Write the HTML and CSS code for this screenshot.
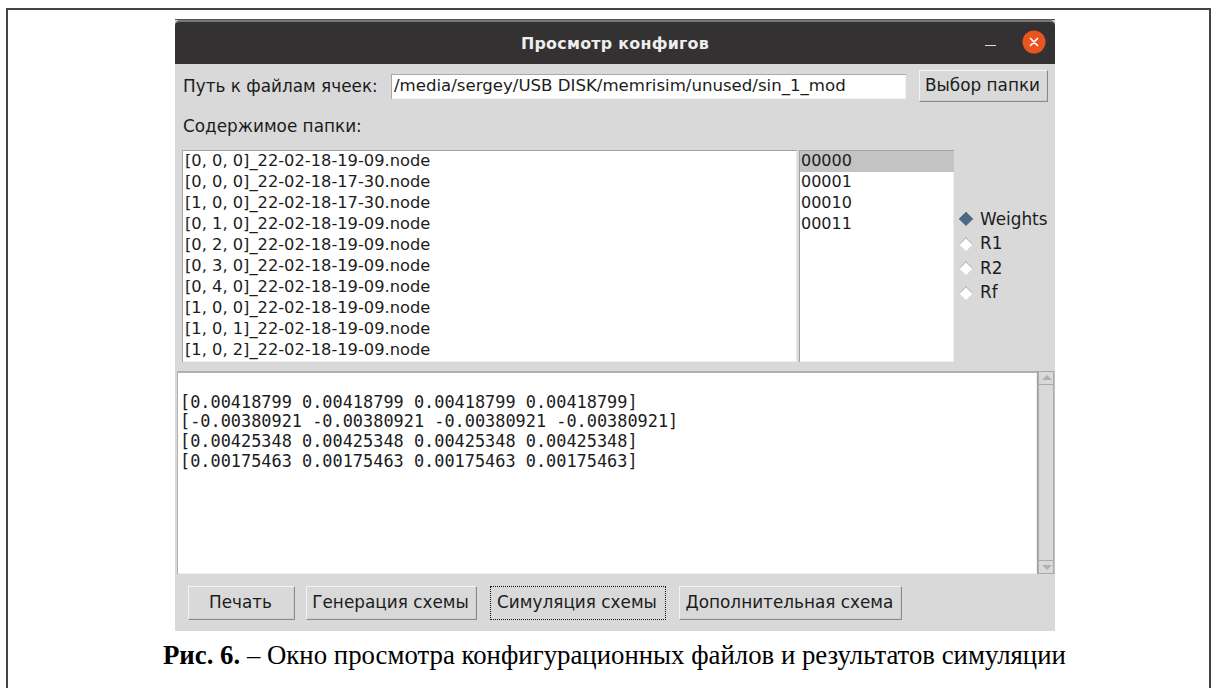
FILE: index.html
```html
<!DOCTYPE html>
<html lang="ru">
<head>
<meta charset="utf-8">
<title>Просмотр конфигов</title>
<link rel="stylesheet" href="styles.css">
</head>
<body>
<main class="page">
  <figure class="figure">
    <section class="window">
      <header class="titlebar">
        <h1 class="title">Просмотр конфигов</h1>
        <span class="minimize"></span>
        <span class="close">
          <svg width="24" height="24" viewBox="0 0 24 24"><circle cx="12" cy="12" r="11.5" fill="#e95420"/><path d="M8.5 8.5l7 7M15.5 8.5l-7 7" stroke="#fff" stroke-width="1.7" stroke-linecap="round"/></svg>
        </span>
      </header>
      <div class="path-row">
        <span class="path-label">Путь к файлам ячеек:</span>
        <div class="path-input">/media/sergey/USB DISK/memrisim/unused/sin_1_mod</div>
        <button class="btn btn-folder">Выбор папки</button>
      </div>
      <div class="folder-label">Содержимое папки:</div>
      <div class="lists">
        <ul class="listbox files">
          <li>[0, 0, 0]_22-02-18-19-09.node</li>
          <li>[0, 0, 0]_22-02-18-17-30.node</li>
          <li>[1, 0, 0]_22-02-18-17-30.node</li>
          <li>[0, 1, 0]_22-02-18-19-09.node</li>
          <li>[0, 2, 0]_22-02-18-19-09.node</li>
          <li>[0, 3, 0]_22-02-18-19-09.node</li>
          <li>[0, 4, 0]_22-02-18-19-09.node</li>
          <li>[1, 0, 0]_22-02-18-19-09.node</li>
          <li>[1, 0, 1]_22-02-18-19-09.node</li>
          <li>[1, 0, 2]_22-02-18-19-09.node</li>
        </ul>
        <ul class="listbox codes">
          <li class="selected">00000</li>
          <li>00001</li>
          <li>00010</li>
          <li>00011</li>
        </ul>
        <div class="radios">
          <div class="radio"><span class="diamond on"></span>Weights</div>
          <div class="radio"><span class="diamond"></span>R1</div>
          <div class="radio"><span class="diamond"></span>R2</div>
          <div class="radio"><span class="diamond"></span>Rf</div>
        </div>
      </div>
      <div class="output">
        <pre class="text">

[0.00418799 0.00418799 0.00418799 0.00418799]
[-0.00380921 -0.00380921 -0.00380921 -0.00380921]
[0.00425348 0.00425348 0.00425348 0.00425348]
[0.00175463 0.00175463 0.00175463 0.00175463]</pre>
        <div class="scrollbar">
          <span class="arrow up"></span>
          <span class="track"></span>
          <span class="arrow down"></span>
        </div>
      </div>
      <div class="actions">
        <button class="btn btn-print">Печать</button>
        <button class="btn btn-gen">Генерация схемы</button>
        <button class="btn btn-sim focused">Симуляция схемы</button>
        <button class="btn btn-extra">Дополнительная схема</button>
      </div>
    </section>
    <figcaption class="caption"><b>Рис. 6.</b> – Окно просмотра конфигурационных файлов и результатов симуляции</figcaption>
  </figure>
</main>
</body>
</html>
```

FILE: styles.css
```css
html, body {
  margin: 0;
  height: 100%;
  background: #fff;
  overflow: hidden;
}

.page {
  box-sizing: border-box;
  height: 688px;
  margin: 8px 6px 0;
  border: solid #444;
  border-width: 2px 2px 0;
}

.figure {
  margin: 0;
  padding: 10px 0 0 167px;
}

/* Application window */
.window {
  width: 880px;
  height: 611px;
  display: flex;
  flex-direction: column;
  background: #d9d9d9;
  color: #1c1c1c;
  font: 16.85px/21px "DejaVu Sans", sans-serif;
  box-shadow: 0 -1px 0 #555;
}

.titlebar {
  flex: none;
  height: 44px;
  display: flex;
  align-items: center;
  box-sizing: border-box;
  padding-right: 9px;
  background: #333131;
  border-top: 2px solid #777;
  border-radius: 5px 5px 0 0;
  position: relative;
}

.title {
  margin: 0;
  position: absolute;
  left: 0;
  right: 0;
  top: 11px;
  text-align: center;
  color: #eee;
  font-size: 15.9px;
  font-weight: 700;
  letter-spacing: 0.25px;
}

.minimize {
  width: 11px;
  height: 1.5px;
  margin: 5px 0 0 auto;
  background: #ddd;
}

.close {
  display: block;
  height: 24px;
  margin: -2px 0 0 26px;
}

/* Path row */
.path-row {
  flex: none;
  height: 32px;
  margin-top: 6px;
  display: flex;
  align-items: center;
  padding-left: 8px;
}

.path-label {
  width: 208px;
}

.path-input {
  box-sizing: border-box;
  width: 515px;
  height: 25px;
  line-height: 22px;
  padding-left: 2px;
  background: #fff;
  border: solid #a9a9a9;
  border-width: 1px 0 0 1px;
  box-shadow: inset -1px -1px 0 #f2f2f2;
  font-size: 16.6px;
}

.btn {
  box-sizing: border-box;
  height: 34px;
  padding: 0 2px 2px 0;
  background: #d9d9d9;
  color: #1c1c1c;
  font: inherit;
  border: 1px solid;
  border-color: #f4f4f4 #8a8a8a #8a8a8a #f4f4f4;
  box-shadow: inset -1px -1px 0 #cfcfcf;
}

.btn-folder {
  width: 129px;
  height: 32px;
  margin-left: 13px;
}

.folder-label {
  flex: none;
  margin: 14px 0 0 8px;
}

/* File lists */
.lists {
  flex: none;
  height: 212px;
  margin-top: 13px;
  display: flex;
  padding-left: 7px;
}

.listbox {
  box-sizing: border-box;
  height: 212px;
  margin: 0;
  padding: 0;
  list-style: none;
  background: #fff;
  border: solid #a3a3a3;
  border-width: 1px 0 0 1px;
  box-shadow: inset -1px -1px 0 #eee;
  overflow: hidden;
  font-size: 16.27px;
  line-height: 19px;
}

.listbox li {
  height: 21px;
  padding-left: 2px;
  white-space: nowrap;
}

.files {
  width: 615px;
}

.codes {
  width: 155px;
  margin-left: 2px;
  font-size: 16px;
}

.codes li {
  padding-left: 1px;
}

.codes .selected {
  background: #c3c3c3;
}

.radios {
  margin: 57px 0 0 7px;
}

.radio {
  height: 24.5px;
  display: flex;
  align-items: center;
}

.diamond {
  box-sizing: border-box;
  width: 10px;
  height: 10px;
  margin: 0 9px 0 0;
  transform: rotate(45deg);
  background: #fff;
  border: solid #b5b5b5;
  border-width: 1px 0 0 1px;
}

.diamond.on {
  background: #4a6984;
  border-color: #4a6984;
}

/* Output text and scrollbar */
.output {
  flex: none;
  height: 203px;
  margin-top: 9px;
  display: flex;
  padding-left: 2px;
}

.text {
  flex: 1;
  margin: 0;
  padding: 0 0 0 2px;
  background: #fff;
  border: solid #b0b0b0;
  border-width: 2px 0 0 1px;
  box-shadow: inset -1px -1px 0 #eee;
  font: 16.9px/19.7px "DejaVu Sans Mono", monospace;
  overflow: hidden;
}

.scrollbar {
  flex: none;
  width: 18px;
  box-sizing: border-box;
  display: flex;
  flex-direction: column;
  padding: 0 1px 0 0;
  background: #c3c3c3;
  border-left: 1px solid #a3a3a3;
}

.arrow {
  flex: none;
  height: 12px;
  background: #d9d9d9;
  position: relative;
  border: 1px solid #aaa;
}

.arrow::after {
  content: "";
  position: absolute;
  left: 3px;
  border: 5px solid transparent;
}

.arrow.up::after {
  top: -2px;
  border-bottom-color: #b0b0b0;
}

.arrow.down::after {
  top: 4px;
  border-top-color: #b0b0b0;
}

.track {
  flex: 1;
  background: #d9d9d9;
  border: solid #aaa;
  border-width: 0 1px;
}

/* Bottom buttons */
.actions {
  flex: none;
  display: flex;
  margin-top: 12px;
  padding-left: 13px;
}

.btn-print { width: 107px; }
.btn-gen { width: 171px; margin-left: 11px; }
.btn-sim { width: 176px; margin-left: 13px; }
.btn-extra { width: 223px; margin-left: 13px; }

.focused {
  border: 1px dotted #111;
  box-shadow: none;
}

.caption {
  margin-top: 9px;
  margin-left: -12px;
  color: #000;
  font: 26.8px/30px "Liberation Serif", serif;
  white-space: nowrap;
}
```
